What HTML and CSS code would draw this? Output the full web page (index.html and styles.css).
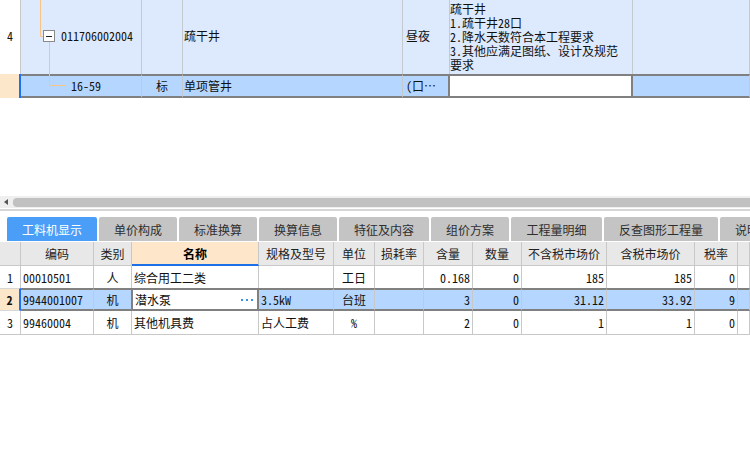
FILE: index.html
```html
<!DOCTYPE html>
<html lang="zh-CN">
<head>
<meta charset="utf-8">
<title>工料机显示</title>
<link rel="stylesheet" href="styles.css">
</head>
<body>
<div class="app">
  <section class="top-grid">
    <svg class="tree" width="70" height="98" viewBox="0 0 70 98">
      <path d="M40.5 0 V36.5 H43" fill="none" stroke="#f7c486" stroke-width="1"/>
      <path d="M49.5 42 V85.5 H66" fill="none" stroke="#f7c486" stroke-width="1"/>
      <rect x="43.5" y="30.5" width="11" height="11" fill="#fff" stroke="#8a8a8a" stroke-width="1"/>
      <path d="M46 36.5 H52" stroke="#222" stroke-width="1"/>
    </svg>
    <div class="trow trow-parent">
      <div class="tc tc-num">4</div>
      <div class="tc tc-code-parent">011706002004</div>
      <div class="tc"></div>
      <div class="tc">疏干井</div>
      <div class="tc tc-unit">昼夜</div>
      <div class="tc tc-feat"><div>疏干井<br>1.疏干井28口<br>2.降水天数符合本工程要求<br>3.其他应满足图纸、设计及规范<br>要求</div></div>
      <div class="tc"></div>
    </div>
    <div class="trow trow-sel">
      <div class="tc tc-num"></div>
      <div class="tc tc-code-child">16-59</div>
      <div class="tc tc-center">标</div>
      <div class="tc">单项管井</div>
      <div class="tc tc-unit">(口…</div>
      <div class="tc tc-current"></div>
      <div class="tc"></div>
    </div>
  </section>

  <div class="blank"></div>

  <div class="hscroll">
    <span class="hscroll-arrow"></span>
    <div class="hscroll-thumb"></div>
  </div>
  <div class="divider"></div>

  <nav class="tabs">
    <div class="tab tab-active w90">工料机显示</div>
    <div class="tab w78">单价构成</div>
    <div class="tab w78">标准换算</div>
    <div class="tab w78">换算信息</div>
    <div class="tab w90">特征及内容</div>
    <div class="tab w78">组价方案</div>
    <div class="tab w91">工程量明细</div>
    <div class="tab w114">反查图形工程量</div>
    <div class="tab w78">说明信息</div>
  </nav>

  <section class="bottom-grid">
    <div class="brow bhead">
      <div class="bc"></div>
      <div class="bc">编码</div>
      <div class="bc">类别</div>
      <div class="bc bc-name">名称</div>
      <div class="bc">规格及型号</div>
      <div class="bc">单位</div>
      <div class="bc">损耗率</div>
      <div class="bc">含量</div>
      <div class="bc">数量</div>
      <div class="bc">不含税市场价</div>
      <div class="bc">含税市场价</div>
      <div class="bc">税率</div>
      <div class="bc"></div>
    </div>
    <div class="brow">
      <div class="bc center">1</div>
      <div class="bc">00010501</div>
      <div class="bc center">人</div>
      <div class="bc">综合用工二类</div>
      <div class="bc"></div>
      <div class="bc center">工日</div>
      <div class="bc"></div>
      <div class="bc right">0.168</div>
      <div class="bc right">0</div>
      <div class="bc right">185</div>
      <div class="bc right">185</div>
      <div class="bc right">0</div>
      <div class="bc"></div>
    </div>
    <div class="brow brow-sel">
      <div class="bc center bc-num">2</div>
      <div class="bc">9944001007</div>
      <div class="bc center">机</div>
      <div class="bc bc-current">潜水泵<svg class="dots" width="12" height="2" viewBox="0 0 12 2"><rect x="0" y="0" width="2" height="2" fill="#3f8fe0"/><rect x="5" y="0" width="2" height="2" fill="#3f8fe0"/><rect x="10" y="0" width="2" height="2" fill="#3f8fe0"/></svg></div>
      <div class="bc">3.5kW</div>
      <div class="bc center">台班</div>
      <div class="bc"></div>
      <div class="bc right">3</div>
      <div class="bc right">0</div>
      <div class="bc right">31.12</div>
      <div class="bc right">33.92</div>
      <div class="bc right">9</div>
      <div class="bc"></div>
    </div>
    <div class="brow brow-last">
      <div class="bc center">3</div>
      <div class="bc">99460004</div>
      <div class="bc center">机</div>
      <div class="bc">其他机具费</div>
      <div class="bc">占人工费</div>
      <div class="bc center">%</div>
      <div class="bc"></div>
      <div class="bc right">2</div>
      <div class="bc right">0</div>
      <div class="bc right">1</div>
      <div class="bc right">1</div>
      <div class="bc right">0</div>
      <div class="bc"></div>
    </div>
  </section>
</div>
</body>
</html>
```

FILE: styles.css
```css
* { box-sizing: border-box; }

html, body {
  margin: 0;
  padding: 0;
}

body {
  width: 750px;
  height: 467px;
  overflow: hidden;
  background: #fff;
  font-family: "Noto Sans Mono CJK SC", "Noto Sans CJK SC", "DejaVu Sans", sans-serif;
  font-size: 12px;
  color: #111;
}

.app {
  display: flex;
  flex-direction: column;
}

/* ---------- top grid ---------- */
.top-grid {
  position: relative;
  height: 98px;
}

.tree {
  position: absolute;
  left: 0;
  top: 0;
  z-index: 1;
  pointer-events: none;
}

.trow {
  display: grid;
  grid-template-columns: 21px 121px 41px 220px 47px 183px 1fr;
}

.trow-parent {
  height: 74px;
  background: #dde9fc;
}

.tc {
  display: flex;
  align-items: center;
  border-right: 1px solid #c4c8cf;
  padding-left: 1px;
  white-space: nowrap;
  overflow: hidden;
}

.trow-parent .tc {
  padding-bottom: 3px;
}

.tc-num {
  justify-content: center;
  background: #fff;
  border-right-color: #c8c8c8;
  padding-left: 0;
}

.tc-center {
  justify-content: center;
  padding-left: 0;
}

.tc-unit { padding-left: 3px; }

.tc-code-parent { padding-left: 40px; }

.tc-code-child { padding-left: 50px; }

.trow-parent .tc-feat {
  white-space: normal;
  line-height: 14px;
  padding-left: 0;
  padding-bottom: 1px;
}

.trow-sel {
  height: 24px;
  background: #b5d6fe;
}

.trow-sel .tc {
  border-top: 2px solid #808080;
  border-bottom: 2px solid #808080;
  padding-bottom: 1px;
}

.trow-sel .tc-num {
  background: #fde7cb;
  border-top: 0;
  border-bottom: 0;
  border-right: 2px solid #1a6ff2;
}

.tc-current {
  background: #fff;
  border-right: 2px solid #808080 !important;
  box-shadow: -2px 0 0 #808080;
}

/* ---------- blank area ---------- */
.blank { height: 98px; }

/* ---------- horizontal scrollbar ---------- */
.hscroll {
  height: 12px;
  background: #efefef;
  display: flex;
  align-items: center;
  padding-left: 4px;
}

.hscroll-arrow {
  width: 0;
  height: 0;
  border-top: 3px solid transparent;
  border-bottom: 3px solid transparent;
  border-right: 4px solid #555;
}

.hscroll-thumb {
  flex: 1;
  margin-left: 5px;
  height: 9px;
  border-radius: 4px 0 0 4px;
  background: #c1c1c1;
}

.divider {
  margin-top: 1px;
  height: 2px;
  background: #d6d6d6;
}

/* ---------- tabs ---------- */
.tabs {
  margin-top: 6px;
  height: 24px;
  display: flex;
  gap: 2px;
  padding-left: 7px;
  overflow: hidden;
}

.tab {
  flex: 0 0 auto;
  display: flex;
  align-items: center;
  justify-content: center;
  background: #c4c4c4;
  color: #2e2e2e;
  border-radius: 2px 2px 0 0;
  white-space: nowrap;
}

.tab-active {
  background: #4a9ef8;
  color: #fff;
}

.w78 { width: 78px; }
.w90 { width: 90px; }
.w91 { width: 91px; }
.w114 { width: 114px; }

/* ---------- bottom grid ---------- */
.bottom-grid {
  margin-top: 1px;
}

.brow {
  display: grid;
  grid-template-columns: 21px 73px 38px 127px 75px 41px 49px 49px 49px 85px 88px 43px 1fr;
  height: 23px;
}

.bc {
  display: flex;
  align-items: center;
  padding: 0 2px;
  border-right: 1px solid #c8c8c8;
  border-bottom: 1px solid #c8c8c8;
  white-space: nowrap;
  overflow: hidden;
}

.center { justify-content: center; }
.right { justify-content: flex-end; }

.bhead {
  height: 24px;
  background: #e8e8e8;
}

.bhead .bc {
  justify-content: center;
  color: #222;
}

.bhead .bc-name {
  background: #fde6c9;
  border-bottom: 2px solid #1d6fe6;
  font-weight: bold;
  color: #000;
}

.brow-sel {
  margin-top: -1px;
  background: #b5d6fe;
}

.brow-sel .bc {
  border-top: 2px solid #808080;
  border-bottom: 2px solid #808080;
}

.brow-sel .bc-num {
  background: #fde7cb;
  font-weight: bold;
  border-top: 1px solid #d6d6d6;
  border-bottom: 1px solid #d6d6d6;
  border-right: 2px solid #1a6ff2;
}

.brow-sel .bc-current {
  background: #fff;
  justify-content: space-between;
  padding-right: 4px;
  border-left: 1px solid #808080;
  border-right: 2px solid #808080;
  box-shadow: -1px 0 0 #808080;
}

.dots {
  display: block;
}

.brow-last {
  height: 24px;
}
```
